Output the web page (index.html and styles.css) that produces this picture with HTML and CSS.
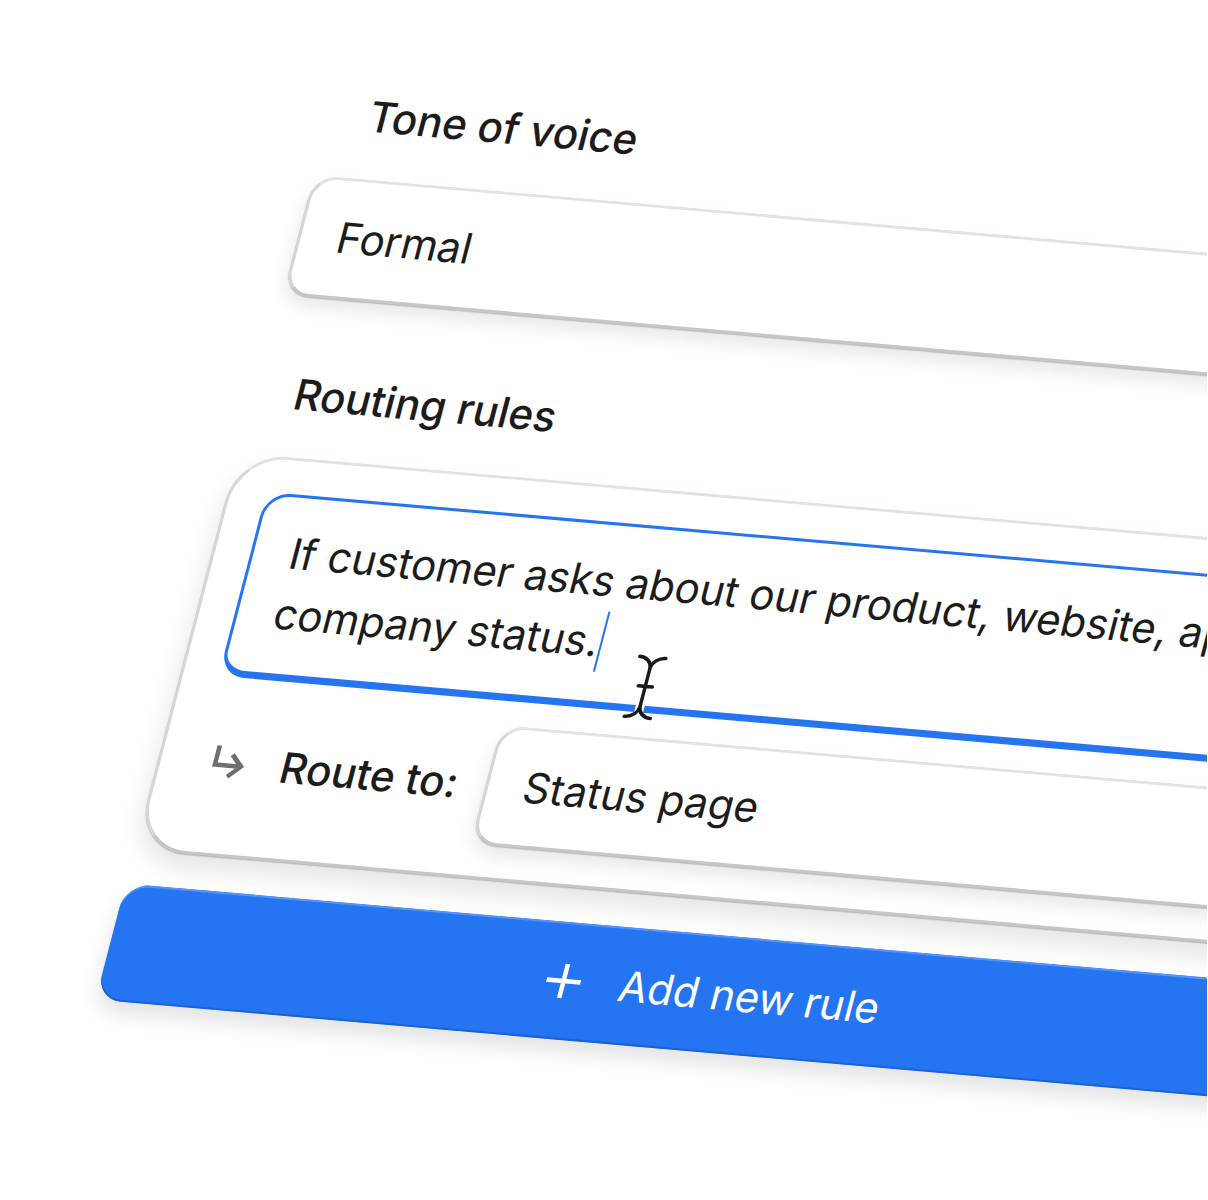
FILE: index.html
```html
<!DOCTYPE html>
<html lang="en">
<head>
<meta charset="utf-8">
<title>Routing rules</title>
<link rel="stylesheet" href="styles.css">
</head>
<body>
<main class="viewport">
  <div class="scene">
    <div class="label">Tone of voice</div>
    <div class="field field-tone">Formal</div>
    <div class="label label-routing">Routing rules</div>
    <section class="card">
      <div class="rule-text">If customer asks about our product, website, api, or<br>company status.<span class="caret"></span></div>
      <div class="route-row">
        <svg class="route-icon" viewBox="0 0 36 36" fill="none" stroke="#6f6f6f" stroke-width="4.5"><path d="M6 2V21H31M21 10L32 21L21 32"/></svg>
        <span class="route-label">Route to:</span>
        <div class="field field-route">Status page</div>
      </div>
      <svg class="ibeam" viewBox="0 0 44 68" fill="none" stroke-linecap="round">
        <path class="ibeam-halo" d="M22 42V58"/>
        <path class="ibeam-line" d="M9 4C15 4 22 8 22 16V52C22 60 15 64 9 64M35 4C29 4 22 8 22 16M22 52C22 60 29 64 35 64M15 33H29"/>
      </svg>
    </section>
    <button class="add-btn">
      <svg class="plus" viewBox="0 0 40 40" fill="none" stroke="#fff" stroke-width="4.5"><path d="M20 3V37M3 20H37"/></svg>
      <span>Add new rule</span>
    </button>
  </div>
</main>
</body>
</html>
```
FILE: styles.css
```css
* { box-sizing: border-box; }
html, body { margin: 0; background: #fff; }
.viewport {
  width: 1207px;
  height: 1200px;
  overflow: hidden;
}
.scene {
  width: 1200px;
  display: flex;
  flex-direction: column;
  transform-origin: 0 0;
  transform: matrix(1, 0.087, -0.26, 1, 335.4, 84.7);
  font-family: Inter, "Liberation Sans", sans-serif;
  font-size: 41.6px;
  line-height: 60px;
  color: #1c1c1c;
}
.label {
  height: 60px;
  margin-top: -2px;
  margin-bottom: 32px;
  padding-left: 41px;
  font-weight: 450;
}
.label-routing { margin-top: 66px; margin-bottom: 32px; padding-left: 39px; }
.field {
  height: 120px;
  padding: 26px 36px;
  background: #fff;
  border: 3px solid #e2e2e2;
  border-bottom-color: #c6c6c6;
  border-left-color: #d6d6d6;
  border-radius: 25px;
  box-shadow: 0 1px 1px rgba(0, 0, 0, .2), 0 10px 18px rgba(0, 0, 0, .09);
}
.field-tone { margin-left: 2px; }
.card {
  position: relative;
  height: 397px;
  margin-left: -2px;
  padding: 33px 33px 0;
  background: #fff;
  border: 3px solid #e2e2e2;
  border-bottom-color: #c6c6c6;
  border-left-color: #d6d6d6;
  border-radius: 50px;
  box-shadow: 0 1px 1px rgba(0, 0, 0, .2), 0 14px 24px rgba(0, 0, 0, .1);
}
.rule-text {
  position: relative;
  height: 184px;
  margin-left: 2px;
  padding: 25px 36px;
  border: 3px solid #2575f2;
  border-bottom-width: 7px;
  border-radius: 25px;
  white-space: nowrap;
}
.caret {
  display: inline-block;
  width: 2.5px;
  height: 60px;
  margin-left: 1px;
  vertical-align: top;
  background: #2575f2;
}
.route-row {
  display: flex;
  align-items: center;
  margin-top: 24px;
}
.route-icon {
  flex: none;
  width: 36px;
  height: 36px;
  margin: 0 35px 0 15px;
}
.route-label {
  flex: none;
  width: 205px;
  font-weight: 500;
}
.field-route { flex: 1; height: 119px; margin-right: -20px; padding-left: 35px; }
.ibeam {
  position: absolute;
  left: 433px;
  top: 158px;
  width: 44px;
  height: 68px;
}
.ibeam-halo { stroke: #fff; stroke-width: 9; }
.ibeam-line { stroke: #1a1a1a; stroke-width: 3.5; }
.add-btn {
  display: flex;
  align-items: center;
  justify-content: center;
  gap: 36px;
  height: 116px;
  margin-top: 34px;
  margin-left: -2px;
  padding: 0;
  font: inherit;
  color: #fff;
  background: #2575f2;
  border: 0;
  border-radius: 25px;
  box-shadow: inset 0 2px 0 #5593f6, inset 0 -2px 0 #1d62d4, 0 12px 20px rgba(0, 0, 0, .11);
}
.plus { flex: none; width: 40px; height: 40px; }
```
